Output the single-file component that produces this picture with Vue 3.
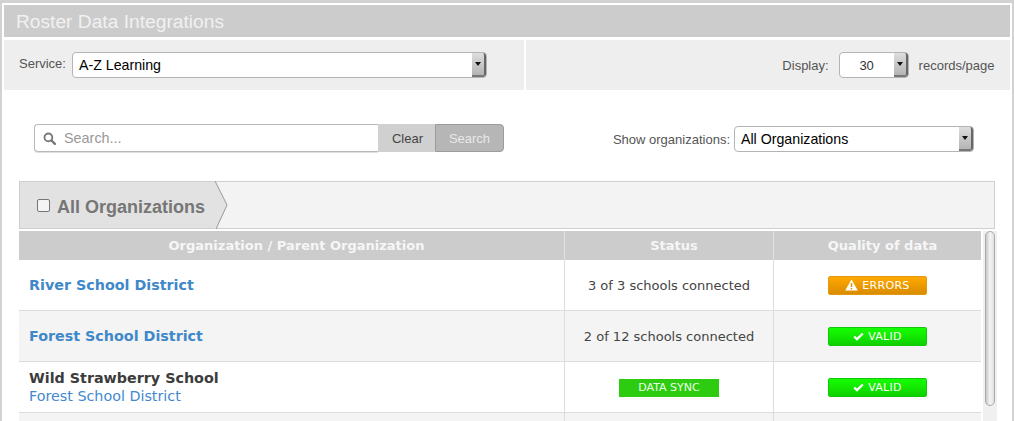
<script setup>
const rows = [
  { name: 'River School District', isLink: true, status: '3 of 3 schools connected', quality: 'errors' },
  { name: 'Forest School District', isLink: true, status: '2 of 12 schools connected', quality: 'valid' },
  { name: 'Wild Strawberry School', parent: 'Forest School District', sync: true, quality: 'valid' },
  { name: '', quality: '' }
]
</script>

<template>
  <div class="page">
    <div class="panel">
      <h1 class="title">Roster Data Integrations</h1>
      <div class="toolbar">
        <div class="tool tool-left">
          <span class="label service-label">Service:</span>
          <div class="select service-select">
            <span class="select-text">A-Z Learning</span>
            <span class="select-btn"><i class="caret"></i></span>
          </div>
        </div>
        <div class="tool tool-right">
          <span class="label">Display:</span>
          <div class="select display-select">
            <span class="select-text centered">30</span>
            <span class="select-btn"><i class="caret"></i></span>
          </div>
          <span class="label">records/page</span>
        </div>
      </div>

      <div class="filters">
        <div class="search">
          <div class="search-input">
            <svg class="search-icon" viewBox="0 0 14 14" width="13" height="13">
              <circle cx="5.8" cy="5.8" r="4.2" fill="none" stroke="#777" stroke-width="2" />
              <path d="M9 9l3.8 3.8" stroke="#777" stroke-width="2.4" stroke-linecap="round" />
            </svg>
            <span class="placeholder">Search...</span>
          </div>
          <button class="btn-clear">Clear</button>
          <button class="btn-search">Search</button>
        </div>
        <div class="show-orgs">
          <span class="label">Show organizations:</span>
          <div class="select org-select">
            <span class="select-text">All Organizations</span>
            <span class="select-btn"><i class="caret"></i></span>
          </div>
        </div>
      </div>

      <div class="crumbs">
        <div class="crumb">
          <span class="checkbox"></span>
          <span class="crumb-text">All Organizations</span>
          <svg class="chevron" width="14" height="48" viewBox="0 0 14 48">
            <path d="M0 0H1L13 24 2 48H0Z" fill="#e2e2e2" />
            <path d="M1 0L13 24 2 48" fill="none" stroke="#999" stroke-width="1" />
          </svg>
        </div>
      </div>

      <div class="table-area">
        <div class="table">
          <div class="row head">
            <div class="cell c1">Organization / Parent Organization</div>
            <div class="cell c2">Status</div>
            <div class="cell c3">Quality of data</div>
          </div>
          <div v-for="(row, i) in rows" :key="i" class="row body-row" :class="{ odd: i % 2 === 1 }">
            <div class="cell c1 org">
              <a v-if="row.isLink" class="org-link">{{ row.name }}</a>
              <template v-else>
                <div class="org-name">{{ row.name }}</div>
                <a v-if="row.parent" class="org-parent">{{ row.parent }}</a>
              </template>
            </div>
            <div class="cell c2">
              <span v-if="row.sync" class="sync">DATA SYNC</span>
              <template v-else>{{ row.status }}</template>
            </div>
            <div class="cell c3">
              <span v-if="row.quality === 'errors'" class="badge errors">
                <svg width="13" height="12" viewBox="0 0 13 12"><path d="M6.5 0.5L12.8 11.5H0.2Z" fill="#fff" /><path d="M6.5 4v4M6.5 9v1.4" stroke="#e59400" stroke-width="1.5" /></svg>
                ERRORS
              </span>
              <span v-else-if="row.quality === 'valid'" class="badge valid">
                <svg width="11" height="9" viewBox="0 0 11 9"><path d="M1.2 4.5L4 7.2 9.8 1.5" fill="none" stroke="#fff" stroke-width="2.4" /></svg>
                VALID
              </span>
            </div>
          </div>
        </div>
        <div class="scroll-track"><div class="scroll-thumb"></div></div>
      </div>
    </div>
  </div>
</template>

<style scoped>
.page {
  height: 421px;
  box-sizing: border-box;
  padding: 3px 2px 0 2px;
  background: #d2d2d2;
  font-family: "Liberation Sans", Arial, sans-serif;
  overflow: hidden;
}
.panel {
  background: #fff;
  height: 100%;
  padding: 2px 2px 0 2px;
  box-sizing: border-box;
}
.title {
  margin: 0;
  height: 32px;
  background: #cccccc;
  color: #f1f1f1;
  font-size: 19.2px;
  font-weight: 400;
  line-height: 34px;
  padding-left: 12px;
}
.toolbar {
  display: flex;
  gap: 2px;
  margin-top: 3px;
}
.tool {
  height: 50px;
  background: #eeeeee;
  display: flex;
  align-items: center;
  box-sizing: border-box;
}
.tool-left {
  width: 520px;
  padding-left: 15px;
  gap: 6px;
}
.tool-right {
  flex: 1;
  justify-content: flex-end;
  padding-right: 15.5px;
  gap: 10px;
}
.label {
  font-size: 13px;
  color: #555;
}
.service-label {
  margin-top: -4px;
}
.select {
  height: 26px;
  box-sizing: border-box;
  display: flex;
  align-items: stretch;
  background: #fff;
  border: 1px solid #b4b4b4;
  border-radius: 4px;
  color: #000;
  font-size: 14.2px;
}
.service-select { width: 415px; }
.display-select { width: 70px; }
.org-select { width: 240px; }
.select-text {
  flex: 1;
  line-height: 25px;
  padding-left: 6px;
}
.select-text.centered {
  text-align: center;
  padding-left: 0;
  font-size: 13px;
  color: #333;
}
.select-btn {
  width: 12px;
  display: flex;
  align-items: center;
  justify-content: center;
  background: linear-gradient(#dedede, #b4b4b4);
  border-right: 2px solid #666;
  border-bottom: 2px solid #777;
  border-radius: 0 3px 3px 0;
}
.caret {
  width: 0;
  height: 0;
  border-left: 3px solid transparent;
  border-right: 3px solid transparent;
  border-top: 4px solid #111;
}
.filters {
  display: flex;
  justify-content: space-between;
  align-items: center;
  height: 28px;
  margin: 34px 36px 0 30px;
}
.search {
  display: flex;
  width: 470px;
  height: 28px;
}
.search-input {
  flex: 1;
  box-sizing: border-box;
  display: flex;
  align-items: center;
  gap: 8px;
  padding-left: 8px;
  border: 1px solid #b8b8b8;
  border-right: 0;
  border-radius: 4px 0 0 4px;
  box-shadow: 0 1px 1px #ddd;
}
.placeholder {
  color: #999;
  font-size: 14.4px;
}
.btn-clear, .btn-search {
  border: 0;
  padding: 0;
  font: 13px "Liberation Sans", Arial, sans-serif;
  height: 28px;
}
.btn-clear {
  width: 57px;
  padding-left: 2px;
  background: #d0d0d0;
  color: #444;
}
.btn-search {
  width: 69px;
  box-sizing: border-box;
  background: #b6b6b6;
  color: #e8e8e8;
  border: 1px solid #9c9c9c;
  border-radius: 0 4px 4px 0;
}
.show-orgs {
  display: flex;
  align-items: center;
  gap: 4px;
  margin-top: 2px;
}
.crumbs {
  margin: 29px 15px 0 15px;
  height: 48px;
  box-sizing: border-box;
  background: #f3f3f3;
  border: 1px solid #cfcfcf;
}
.crumb {
  position: relative;
  display: flex;
  align-items: center;
  width: 195px;
  height: 46px;
  background: #e2e2e2;
  padding: 4px 0 0 17px;
  box-sizing: border-box;
}
.checkbox {
  width: 13px;
  height: 13px;
  box-sizing: border-box;
  border: 1px solid #767676;
  border-radius: 2px;
  background: #f4f4f4;
  margin: -3px 7px 0 0;
}
.crumb-text {
  font-size: 18px;
  font-weight: 700;
  color: #767676;
  white-space: nowrap;
}
.chevron {
  position: absolute;
  left: 194px;
  top: -1px;
}
.table-area {
  display: flex;
  margin: 2px 13px 0 15px;
  overflow: hidden;
  height: 190px;
}
.table {
  width: 962px;
  flex: none;
  font-family: "DejaVu Sans", sans-serif;
  font-size: 13px;
  color: #444;
}
.row {
  display: grid;
  grid-template-columns: 546px 209px 207px;
}
.head {
  height: 29px;
  background: #cccccc;
  color: #f6f6f6;
  font-weight: 700;
  font-size: 13px;
}
.head .cell {
  border-bottom: 0;
  border-right-color: #e2e2e2;
  padding-left: 10px;
}
.body-row {
  height: 51px;
}
.odd {
  background: #f4f4f4;
}
.cell {
  display: flex;
  align-items: center;
  justify-content: center;
  box-sizing: border-box;
  border-right: 1px solid #dcdcdc;
  border-bottom: 1px solid #dcdcdc;
}
.cell.c3 {
  border-right: 0;
}
.org {
  flex-direction: column;
  align-items: flex-start;
  padding-left: 10px;
}
.head .c1 {
  align-items: center;
}
.org-link {
  color: #3f88c9;
  font-weight: 700;
  font-size: 14.3px;
}
.org-name {
  font-weight: 700;
  color: #3c3c3c;
  font-size: 14.3px;
  line-height: 17px;
}
.org-parent {
  color: #4189cf;
  font-size: 14.3px;
  line-height: 18px;
}
.sync {
  width: 100px;
  height: 18px;
  margin-top: 1px;
  background: #2ecc10;
  color: #eaffea;
  font-size: 11px;
  line-height: 18px;
  text-align: center;
}
.badge {
  width: 99px;
  height: 19px;
  box-sizing: border-box;
  display: flex;
  align-items: center;
  justify-content: center;
  gap: 4px;
  border-radius: 2px;
  font-size: 11px;
  letter-spacing: 0.3px;
  color: #fff;
}
.errors {
  background: linear-gradient(#ffa800, #d98c00);
  border: 1px solid #e39a12;
}
.valid {
  background: linear-gradient(#14ff00, #10d000);
  border: 1px solid #12c80a;
}
.scroll-track {
  width: 14px;
  margin-left: 2px;
  background: #f0f0f0;
  box-sizing: border-box;
  padding-left: 2px;
}
.scroll-thumb {
  width: 10px;
  height: 175px;
  box-sizing: border-box;
  border: 1px solid #aaa;
  border-radius: 5px;
  background: linear-gradient(90deg, #c9c9c9, #f4f4f4 50%, #e0e0e0);
}
</style>

<style>
html, body {
  margin: 0;
  overflow: hidden;
}
</style>
